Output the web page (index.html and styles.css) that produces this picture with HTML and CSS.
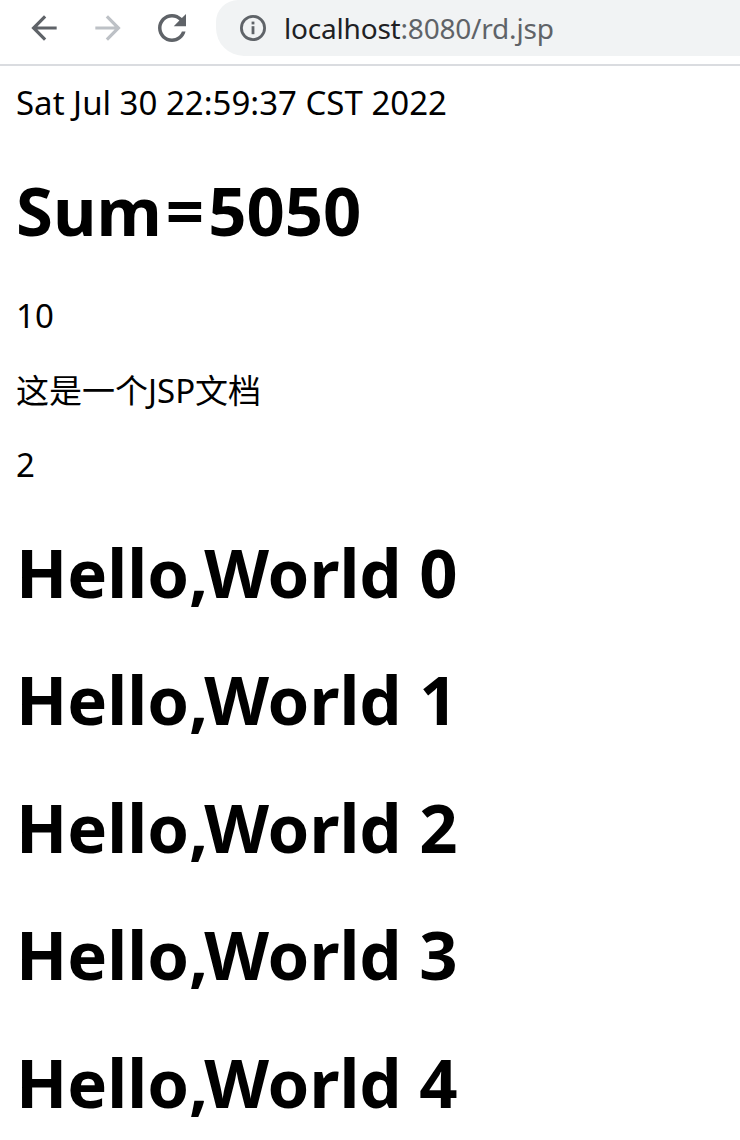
FILE: index.html
```html
<!DOCTYPE html>
<html lang="zh-CN">
<head>
<meta charset="utf-8">
<title>rd.jsp</title>
<link rel="stylesheet" href="styles.css">
</head>
<body>
<header class="chrome">
  <nav class="nav">
    <span class="btn">
      <svg class="ic-arrow" viewBox="0 0 24 24"><path d="M20 11H7.83l5.59-5.59L12 4l-8 8 8 8 1.41-1.41L7.83 13H20v-2z"/></svg>
    </span>
    <span class="btn btn-off">
      <svg class="ic-arrow" viewBox="0 0 24 24"><path d="M4 11h12.17l-5.59-5.59L12 4l8 8-8 8-1.41-1.41L16.17 13H4v-2z"/></svg>
    </span>
    <span class="btn">
      <svg class="ic-reload" viewBox="0 0 24 24"><path d="M17.65 6.35C16.2 4.9 14.21 4 12 4c-4.42 0-7.99 3.58-7.99 8s3.57 8 7.99 8c3.73 0 6.84-2.55 7.73-6h-2.08c-.82 2.33-3.04 4-5.65 4-3.31 0-6-2.69-6-6s2.69-6 6-6c1.66 0 3.14.69 4.22 1.78L13 11h7V4l-2.35 2.35z"/></svg>
    </span>
  </nav>
  <div class="omnibox">
    <svg class="ic-info" viewBox="0 0 28 28">
      <circle cx="14" cy="14" r="11.6" fill="none" stroke="#5f6368" stroke-width="2.8"/>
      <rect x="12.6" y="12.2" width="2.8" height="8" fill="#5f6368"/>
      <rect x="12.6" y="7.6" width="2.8" height="2.8" fill="#5f6368"/>
    </svg>
    <span class="url"><span class="host">localhost</span>:8080/rd.jsp</span>
  </div>
</header>
<main class="page">
  <div class="date">Sat Jul 30 22:59:37 CST 2022</div>
  <h1>Sum<span class="eq">=</span>5050</h1>
  <p>10</p>
  <p>这是一个JSP文档</p>
  <p>2</p>
  <h1>Hello,World 0</h1>
  <h1>Hello,World 1</h1>
  <h1>Hello,World 2</h1>
  <h1>Hello,World 3</h1>
  <h1>Hello,World 4</h1>
</main>
</body>
</html>
```
FILE: styles.css
```css
html, body {
  margin: 0;
  padding: 0;
  background: #ffffff;
}
body {
  font-family: "Noto Sans", "Noto Sans CJK SC", sans-serif;
  color: #000000;
  overflow: hidden;
}
.chrome {
  display: flex;
  align-items: flex-start;
  height: 64px;
  border-bottom: 2px solid #dadce0;
  background: #ffffff;
}
.nav {
  display: flex;
  padding-left: 12px;
}
.btn {
  width: 64px;
  height: 56px;
  display: flex;
  align-items: center;
  justify-content: center;
}
.btn svg {
  fill: #5f6368;
}
.btn-off svg {
  fill: #bdc1c6;
}
.ic-arrow {
  width: 38px;
  height: 38px;
}
.ic-reload {
  width: 42px;
  height: 42px;
}
.omnibox {
  flex: 1;
  margin-left: 12px;
  height: 56px;
  background: #f1f3f4;
  border-radius: 22px 0 0 28px;
  display: flex;
  align-items: center;
  padding-left: 23px;
}
.ic-info {
  width: 28px;
  height: 28px;
  flex: none;
}
.url {
  margin-left: 17px;
  font-size: 28px;
  color: #5f6368;
  letter-spacing: -0.2px;
}
.host {
  color: #202124;
}
.page {
  padding: 16px 16px 0;
}
.date {
  font-size: 33px;
  line-height: 42px;
}
h1 {
  font-size: 67px;
  line-height: 84px;
  font-weight: 700;
  margin: 43.5px 0;
}
.eq {
  padding: 0 4px;
}
p {
  font-size: 33px;
  line-height: 42px;
  margin: 32.5px 0;
}
```
